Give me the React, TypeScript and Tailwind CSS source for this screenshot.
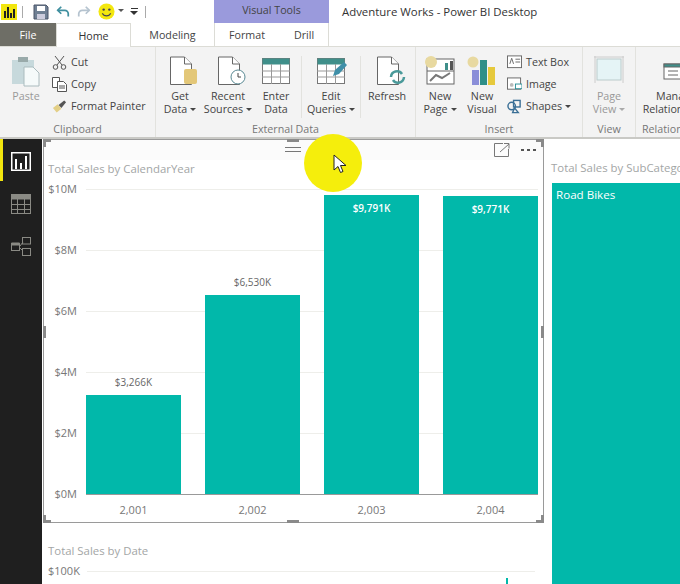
import React from "react";

const font = { fontFamily: '"Open Sans", "Noto Sans", sans-serif' };

function Doc({ children }: { children?: React.ReactNode }) {
  return (
    <svg width="30" height="30" viewBox="0 0 30 30" fill="none" className="ml-[8px]">
      <path d="M1.5 1h14l7 7v20.5h-21z" fill="#fff" stroke="#666" />
      <path d="M15.5 1v7h7" stroke="#666" fill="#fff" />
      {children}
    </svg>
  );
}

function Caret({ color = "#444" }: { color?: string }) {
  return <span className="inline-block ml-[3px] mb-[2px] w-0 h-0 border-x-[3px] border-x-transparent border-t-[3px]" style={{ borderTopColor: color }} />;
}

function TableIcon({ w = 28, h = 26 }: { w?: number; h?: number }) {
  return (
    <svg width={w} height={h} viewBox="0 0 28 26" fill="none">
      <rect x="0.5" y="0.5" width="27" height="25" fill="#fff" stroke="#777" />
      <rect x="0.5" y="0.5" width="27" height="6" fill="#3f8f8a" />
      <path d="M0 13h28M0 19h28M9.5 6v20M18.5 6v20" stroke="#999" />
    </svg>
  );
}

function BigBtn({ w, icon, l1, l2, caret, muted }: { w: number; icon: React.ReactNode; l1: string; l2?: string; caret?: boolean; muted?: boolean }) {
  return (
    <div className={`flex flex-col items-center shrink-0 ${muted ? "text-[#999]" : "text-[#444]"}`} style={{ width: w }}>
      <div className="h-[34px] flex items-start justify-center">{icon}</div>
      <div className="leading-[13px] text-center whitespace-nowrap">{l1}</div>
      {l2 && (
        <div className="leading-[13px] text-center whitespace-nowrap">
          {l2}
          {caret && <Caret color={muted ? "#aaa" : "#444"} />}
        </div>
      )}
    </div>
  );
}

function Group({ w, label, children, pl = 0 }: { w: number; label: string; children: React.ReactNode; pl?: number }) {
  return (
    <div className="flex flex-col shrink-0 border-r border-[#e2e2de]" style={{ width: w }}>
      <div className="flex h-[75px] pt-[9px]" style={{ paddingLeft: pl }}>{children}</div>
      <div className="text-center text-[#777] leading-[15px] whitespace-nowrap">{label}</div>
    </div>
  );
}

function SmallRow({ icon, text, caret }: { icon: React.ReactNode; text: string; caret?: boolean }) {
  return (
    <div className="h-[22px] flex items-center gap-[4px] whitespace-nowrap text-[#444]">
      <div className="w-[15px] h-[16px] flex items-center justify-center shrink-0">{icon}</div>
      <span>{text}{caret && <Caret />}</span>
    </div>
  );
}

function ChartVisual() {
  const bars = [
    { h: 99, label: "$3,266K", year: "2,001" },
    { h: 199, label: "$6,530K", year: "2,002" },
    { h: 299, label: "$9,791K", year: "2,003", inside: true },
    { h: 298, label: "$9,771K", year: "2,004", inside: true },
  ];
  const ticks = ["$10M", "$8M", "$6M", "$4M", "$2M", "$0M"];
  return (
    <div className="relative h-[384px] border border-[#9a9a9a] bg-white">
      <div className="h-[20px] flex items-center justify-end pr-[7px] bg-[#fbfbfb]">
        <svg width="16" height="14" viewBox="0 0 16 14" fill="none" className="mr-[11px]" stroke="#777">
          <path d="M9 .5H.5v13h14V6" />
          <path d="M6 9L15 1M10 .5h5v5" />
        </svg>
        <div className="flex gap-[3px]">
          <div className="w-[3px] h-[2px] bg-[#555]" />
          <div className="w-[3px] h-[2px] bg-[#555]" />
          <div className="w-[3px] h-[2px] bg-[#555]" />
        </div>
      </div>
      <div className="pl-[4px] h-[20px] text-[11.4px] leading-[18px] text-[#a3a6a6]">Total Sales by CalendarYear</div>
      <div className="flex mt-[9px]">
        <div className="w-[32px] h-[306px] ml-[1px] flex flex-col gap-[45px] -mt-[8px] text-right text-[11px] leading-[16px] text-[#777] shrink-0">
          {ticks.map((t) => <div key={t}>{t}</div>)}
        </div>
        <div className="relative w-[452px] ml-[9px] h-[306px] flex items-end gap-[24px] border-b border-[#999]">
          <div className="absolute inset-0 flex flex-col gap-[60px]">
            {ticks.slice(0, 5).map((t) => <div key={t} className="h-px bg-[#eeeeea]" />)}
          </div>
          {bars.map((b) => (
            <div key={b.year} className="relative w-[95px] flex flex-col items-center">
              {!b.inside && <div className="text-[10px] leading-[14px] mb-[6px] text-[#666]">{b.label}</div>}
              <div className="w-full bg-[#01b8aa] text-center text-white font-semibold text-[10px] leading-[14px] pt-[6px]" style={{ height: b.h }}>
                {b.inside ? b.label : ""}
              </div>
            </div>
          ))}
        </div>
      </div>
      <div className="flex gap-[24px] ml-[42px] mt-[7px] text-[11px] leading-[16px] text-[#777]">
        {bars.map((b) => <div key={b.year} className="w-[95px] text-center">{b.year}</div>)}
      </div>
      {/* handles */}
      <div className="absolute -left-px -top-px w-[8px] h-[3px] bg-[#8a8a8a]" />
      <div className="absolute -left-px -top-px w-[3px] h-[8px] bg-[#8a8a8a]" />
      <div className="absolute -right-px -top-px w-[8px] h-[3px] bg-[#8a8a8a]" />
      <div className="absolute -right-px -top-px w-[3px] h-[8px] bg-[#8a8a8a]" />
      <div className="absolute -left-px -bottom-px w-[8px] h-[3px] bg-[#8a8a8a]" />
      <div className="absolute -left-px -bottom-px w-[3px] h-[8px] bg-[#8a8a8a]" />
      <div className="absolute -right-px -bottom-px w-[8px] h-[3px] bg-[#8a8a8a]" />
      <div className="absolute -right-px -bottom-px w-[3px] h-[8px] bg-[#8a8a8a]" />
      <div className="absolute left-[243px] -top-px w-[12px] h-[3px] bg-[#8a8a8a]" />
      <div className="absolute left-[243px] -bottom-px w-[12px] h-[3px] bg-[#8a8a8a]" />
      <div className="absolute -left-px top-[186px] w-[3px] h-[12px] bg-[#8a8a8a]" />
      <div className="absolute -right-px top-[186px] w-[3px] h-[12px] bg-[#8a8a8a]" />
      <div className="absolute left-[241px] top-[7px] w-[16px] flex flex-col gap-[3px]">
        <div className="h-px bg-[#777]" />
        <div className="h-px bg-[#777]" />
      </div>
    </div>
  );
}

export default function App() {
  return (
    <div className="relative w-[680px] h-[584px] overflow-hidden bg-white text-[10.7px] flex flex-col" style={font}>
      {/* Title bar */}
      <div className="h-[23px] flex items-center shrink-0 bg-white">
        <div className="w-[16px] h-[16px] ml-[1px] bg-[#f2e60e] flex items-end justify-center gap-px pb-[2px]">
          <div className="w-[2px] h-[7px] bg-[#222]" />
          <div className="w-[2px] h-[11px] bg-[#222]" />
          <div className="w-[2px] h-[5px] bg-[#222]" />
          <div className="w-[2px] h-[9px] bg-[#222]" />
        </div>
        <div className="w-px h-[12px] bg-[#aaa] ml-[5px]" />
        <svg width="16" height="16" viewBox="0 0 16 16" className="ml-[10px]" fill="none">
          <path d="M1 1h12l2 2v12H1z" fill="#6f7f93" stroke="#4a5568" />
          <rect x="4" y="2" width="8" height="5" fill="#fff" />
          <rect x="4" y="10" width="8" height="5" fill="#ccd" />
        </svg>
        <svg width="14" height="14" viewBox="0 0 16 14" fill="none" className="ml-[7px]" stroke="#3f8f9f" strokeWidth="2">
          <path d="M6 1L2 5l4 4" />
          <path d="M2 5h8a4 4 0 0 1 4 4v3" />
        </svg>
        <svg width="14" height="14" viewBox="0 0 16 14" fill="none" className="ml-[7px]" stroke="#b5c3cf" strokeWidth="2">
          <path d="M10 1l4 4-4 4" />
          <path d="M14 5H6a4 4 0 0 0-4 4v3" />
        </svg>
        <svg width="17" height="17" viewBox="0 0 18 18" className="ml-[7px]">
          <circle cx="9" cy="9" r="8.5" fill="#f3e70f" />
          <circle cx="6" cy="7" r="1.3" fill="#445" />
          <circle cx="12" cy="7" r="1.3" fill="#445" />
          <path d="M4.5 11c2 3.5 7 3.5 9 0" stroke="#445" fill="none" strokeWidth="1.2" />
        </svg>
        <Caret color="#555" />
        <div className="ml-[6px] flex flex-col items-center gap-[2px]">
          <div className="w-[7px] h-px bg-[#333]" />
          <div className="w-0 h-0 border-x-[4px] border-x-transparent border-t-[4px] border-t-[#333]" />
        </div>
        <div className="w-px h-[12px] bg-[#aaa] ml-[7px]" />
        <div className="ml-[68px] w-[115px] h-[23px] bg-[#9a9adc] text-[#444] text-center leading-[20px]">Visual Tools</div>
        <div className="ml-[13px] text-[11.4px] text-[#333] whitespace-nowrap">Adventure Works - Power BI Desktop</div>
      </div>
      {/* Tabs */}
      <div className="h-[24px] flex shrink-0 border-b border-[#dcdcd6] text-[#444]">
        <div className="w-[56px] bg-[#6e6e66] text-white text-center leading-[24px]">File</div>
        <div className="w-[75px] bg-white border-x border-t border-[#dcdcd6] h-[24px] text-center leading-[24px] text-[#333]">Home</div>
        <div className="w-[83px] text-center leading-[24px]">Modeling</div>
        <div className="w-[68px] pr-[3px] text-center leading-[24px] border-l border-[#dcdcd6]">Format</div>
        <div className="w-[47px] pr-[2px] text-center leading-[24px] border-r border-[#dcdcd6]">Drill</div>
      </div>
      {/* Ribbon */}
      <div className="h-[92px] flex shrink-0 bg-[#f3f3f3] border-b-2 border-[#c9c9c5] overflow-hidden">
        <Group w={156} label="Clipboard">
          <BigBtn
            w={52}
            muted
            icon={
              <svg width="30" height="31" viewBox="0 0 30 31" fill="none">
                <rect x="1" y="4" width="22" height="24" fill="#c7d9dc" />
                <rect x="7" y="1" width="10" height="5" fill="#9aa" />
                <path d="M13 11h9l6 6v13H13z" fill="#f5fafa" stroke="#aabbbe" />
              </svg>
            }
            l1="Paste"
          />
          <div className="-mt-[5px]">
            <SmallRow
              icon={
                <svg width="15" height="15" viewBox="0 0 15 15" fill="none" stroke="#555">
                  <path d="M3 1l7 9M12 1L5 10" />
                  <circle cx="3.5" cy="12" r="2.3" />
                  <circle cx="11.5" cy="12" r="2.3" />
                </svg>
              }
              text="Cut"
            />
            <SmallRow
              icon={
                <svg width="15" height="15" viewBox="0 0 15 15" fill="#fff" stroke="#555">
                  <path d="M.5 .5h7v10h-7z" />
                  <path d="M5.5 4.5h6l3 3v7h-9z" />
                  <path d="M7 9h6M7 11h6" />
                </svg>
              }
              text="Copy"
            />
            <SmallRow
              icon={
                <svg width="16" height="15" viewBox="0 0 16 15" fill="none">
                  <path d="M1 9l5-4 4 5-5 4z" fill="#e3cf86" />
                  <path d="M7 6l6-5 2 2-5 6z" fill="#555" />
                </svg>
              }
              text="Format Painter"
            />
          </div>
        </Group>
        <Group w={260} label="External Data">
          <div className="w-[146px] flex border-r border-[#e2e2de] pl-[1px] h-[62px] shrink-0">
            <BigBtn
              w={46}
              icon={
                <Doc>
                  <rect x="15" y="13" width="13" height="15" rx="2" fill="#e3c778" />
                </Doc>
              }
              l1="Get"
              l2="Data"
              caret
            />
            <BigBtn
              w={50}
              icon={
                <Doc>
                  <circle cx="21" cy="21" r="7" fill="#fff" stroke="#5a8a94" />
                  <path d="M21 17v4h3" stroke="#444" />
                </Doc>
              }
              l1="Recent"
              l2="Sources"
              caret
            />
            <BigBtn w={46} icon={<div className="pt-[2px]"><TableIcon /></div>} l1="Enter" l2="Data" />
          </div>
          <div className="w-[59px] flex border-r border-[#e2e2de] h-[62px] shrink-0">
            <BigBtn
              w={58}
              icon={
                <div className="relative pt-[2px]">
                  <TableIcon />
                  <svg width="18" height="18" viewBox="0 0 18 18" className="absolute -right-[4px] bottom-[6px]">
                    <path d="M2 16l2-6L13 2l3 3-8 9z" fill="#3f8fa8" />
                  </svg>
                </div>
              }
              l1="Edit"
              l2="Queries"
              caret
            />
          </div>
          <div className="shrink-0">
            <BigBtn
              w={52}
              icon={
                <Doc>
                  <g fill="none" stroke="#4a9a9a" strokeWidth="2.5">
                    <path d="M15 21a6 6 0 0 1 11-3" />
                    <path d="M28 21a6 6 0 0 1-11 3" />
                  </g>
                </Doc>
              }
              l1="Refresh"
            />
          </div>
        </Group>
        <Group w={167} label="Insert" pl={2}>
          <BigBtn
            w={44}
            icon={
              <svg width="32" height="30" viewBox="0 0 32 30" fill="none">
                <rect x="3" y="3" width="27" height="25" fill="#fff" stroke="#666" />
                <path d="M3 15h27" stroke="#666" />
                <path d="M6 25l6-6 6 3 8-5" stroke="#777" strokeWidth="2" />
                <rect x="21" y="7" width="3" height="7" fill="#3f8f8a" />
                <rect x="26" y="5" width="3" height="9" fill="#555" />
                <circle cx="7" cy="6" r="6" fill="#e8d9a0" />
              </svg>
            }
            l1="New"
            l2="Page"
            caret
          />
          <BigBtn
            w={40}
            icon={
              <svg width="30" height="30" viewBox="0 0 30 30">
                <circle cx="6" cy="6" r="5.5" fill="#e8d9a0" />
                <rect x="5" y="14" width="7" height="15" fill="#8a8ed8" />
                <rect x="13" y="4" width="7" height="25" fill="#2f8f88" />
                <rect x="21" y="11" width="7" height="18" fill="#e6c93c" />
              </svg>
            }
            l1="New"
            l2="Visual"
          />
          <div className="-mt-[5px] ml-[5px]">
            <SmallRow
              icon={
                <svg width="16" height="14" viewBox="0 0 16 14" fill="#fff" stroke="#666">
                  <rect x=".5" y=".5" width="15" height="12.5" />
                  <path d="M9 4h5M9 7h5M3 9l2-6 2 6" fill="none" />
                </svg>
              }
              text="Text Box"
            />
            <SmallRow
              icon={
                <svg width="16" height="15" viewBox="0 0 16 15" fill="#fff" stroke="#666">
                  <rect x=".5" y=".5" width="14" height="12" />
                  <circle cx="5" cy="8" r="2" fill="#bbb" stroke="none" />
                  <rect x="9" y="7" width="7" height="5" stroke="#2a8f98" />
                </svg>
              }
              text="Image"
            />
            <SmallRow
              icon={
                <svg width="16" height="15" viewBox="0 0 16 15" fill="none" stroke="#3a6f96" strokeWidth="1.5">
                  <circle cx="5" cy="7" r="4" />
                  <rect x="7" y="1" width="7" height="7" />
                  <path d="M8 9l4 5h-6z" />
                </svg>
              }
              text="Shapes"
              caret
            />
          </div>
        </Group>
        <Group w={53} label="View">
          <BigBtn
            w={52}
            muted
            icon={
              <svg width="30" height="27" viewBox="0 0 30 27" fill="none">
                <rect x="3" y="3" width="24" height="21" fill="#e5f4f6" stroke="#bcc" />
                <path d="M0 1h30M1 0v27M29 0v27" stroke="#ccc" />
              </svg>
            }
            l1="Page"
            l2="View"
            caret
          />
        </Group>
        <div className="flex flex-col shrink-0 w-[44px]">
          <div className="flex h-[75px] pt-[9px] pl-[6px]">
            <div className="flex flex-col items-center text-[#444] w-[68px] shrink-0">
              <div className="h-[34px] flex items-start justify-center pl-[8px]">
                <svg width="34" height="26" viewBox="0 0 34 26" fill="none" stroke="#666">
                  <rect x="1" y="8" width="22" height="15" fill="#fff" />
                  <rect x="1" y="8" width="22" height="3" fill="#3f8f8a" />
                  <path d="M5 15h10M5 19h10" />
                  <path d="M23 12L32 2" />
                </svg>
              </div>
              <div className="leading-[13px] whitespace-nowrap">Manage</div>
              <div className="leading-[13px] whitespace-nowrap">Relationships</div>
            </div>
          </div>
          <div className="text-[#777] leading-[15px] pl-[6px] whitespace-nowrap">Relationships</div>
        </div>
      </div>
      {/* Main */}
      <div className="flex-1 flex min-h-0">
        <div className="relative w-[42px] bg-[#1f1f1f] shrink-0 flex flex-col items-center gap-[23px] pt-[13px]">
          <div className="absolute left-0 top-0 w-[3px] h-[42px] bg-[#f2e60e]" />
          <svg width="20" height="19" viewBox="0 0 20 19" fill="none">
            <rect x=".75" y=".75" width="18.5" height="17.5" stroke="#fff" strokeWidth="1.5" />
            <path d="M4 7h2v10H4zM9 11h2v6H9zM14 4h2v13h-2z" fill="#fff" />
          </svg>
          <svg width="20" height="20" viewBox="0 0 20 20" fill="none" stroke="#8a8a84">
            <rect x=".5" y=".5" width="19" height="19" />
            <rect x="0" y="0" width="20" height="5" fill="#8a8a84" />
            <path d="M0 10.5h20M0 15.5h20M6.5 5v15M13.5 5v15" />
          </svg>
          <svg width="20" height="19" viewBox="0 0 20 19" fill="none" stroke="#8a8a84">
            <rect x=".5" y="6.5" width="8" height="7" />
            <rect x="11.5" y=".5" width="8" height="6.5" />
            <rect x="11.5" y="11.5" width="8" height="7" />
            <path d="M9 9l3-4M9 11l3 3" />
            <rect x="1" y="6" width="7" height="2" fill="#8a8a84" />
          </svg>
        </div>
        <div className="flex-1 flex bg-white overflow-hidden">
          <div className="w-[501px] shrink-0 ml-px">
            <ChartVisual />
            <div className="pl-[5px] mt-[19px] text-[11.4px] leading-[18px] text-[#a3a6a6]">Total Sales by Date</div>
            <div className="flex items-center mt-[3px]">
              <div className="w-[44px] text-[11px] leading-[16px] pl-[5px] text-[#777]">$100K</div>
              <div className="w-[448px] h-px bg-[#eeeeea]" />
            </div>
            <div className="w-[2px] h-[6px] bg-[#01b8aa] ml-[463px] -mt-[1px]" />
          </div>
          <div className="flex-1 pl-[7px] min-w-0">
            <div className="h-[24px] pt-[20px] text-[11.4px] leading-[18px] text-[#a3a6a6] whitespace-nowrap box-content">Total Sales by SubCategory</div>
            <div className="h-[500px] ml-px bg-[#01b8aa] text-white text-[11.6px] pl-[4px] pt-[3px]">Road Bikes</div>
          </div>
        </div>
      </div>
      {/* Cursor highlight */}
      <div className="absolute left-[304px] top-[134px] w-[58px] h-[58px] rounded-full bg-[#f5ee0c]" />
      <svg width="14" height="20" viewBox="0 0 14 20" className="absolute left-[333px] top-[154px]">
        <path d="M1 1v15l4-3.5 2.5 6 2.5-1-2.5-6H13z" fill="#fff" stroke="#222" />
      </svg>
    </div>
  );
}
